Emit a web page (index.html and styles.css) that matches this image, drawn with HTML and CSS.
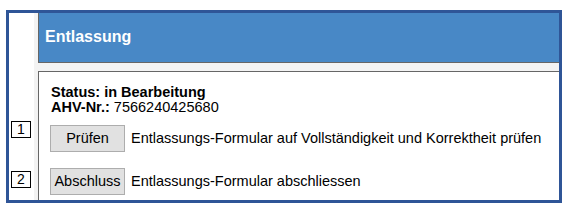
FILE: index.html
```html
<!DOCTYPE html>
<html lang="de">
<head>
<meta charset="utf-8">
<title>Entlassung</title>
<link rel="stylesheet" href="styles.css">
</head>
<body>
<div class="frame">
  <div class="rail"></div>
  <div class="panel">
    <div class="header">Entlassung</div>
    <div class="content">
      <div class="meta">
        <div class="meta-line"><b>Status: in Bearbeitung</b></div>
        <div class="meta-line"><b>AHV-Nr.:</b> 7566240425680</div>
      </div>
      <div class="row row-first">
        <button class="btn" type="button">Prüfen</button>
        <span class="desc">Entlassungs-Formular auf Vollständigkeit und Korrektheit prüfen</span>
      </div>
      <div class="row row-second">
        <button class="btn" type="button">Abschluss</button>
        <span class="desc">Entlassungs-Formular abschliessen</span>
      </div>
    </div>
  </div>
  <span class="marker marker-1">1</span>
  <span class="marker marker-2">2</span>
</div>
</body>
</html>
```

FILE: styles.css
```css
html, body {
  margin: 0;
  padding: 0;
  background: #ffffff;
}

body {
  font-family: "Liberation Sans", Arial, sans-serif;
  color: #000000;
  padding: 10px 0 0 6px;
  width: 570px;
  height: 211px;
  box-sizing: border-box;
  overflow: hidden;
}

.frame {
  position: relative;
  width: 550px;
  height: 187px;
  border: 3px solid #2f5597;
  display: grid;
  grid-template-columns: 25px 1fr;
  overflow: hidden;
  background: #ffffff;
}

.rail {
  background: #ffffff;
}

.panel {
  background: #f3f3f3;
  padding-left: 4px;
  display: flex;
  flex-direction: column;
  min-height: 0;
}

.header {
  height: 48px;
  flex: none;
  background: #4888c6;
  border-left: 1px solid #666666;
  border-bottom: 1px solid #666666;
  color: #ffffff;
  font-weight: bold;
  font-size: 16px;
  display: flex;
  align-items: center;
  padding-left: 6px;
  padding-bottom: 1px;
  box-sizing: content-box;
}

.content {
  margin-top: 8px;
  flex: 1;
  background: #ffffff;
  border-left: 1px solid #666666;
  border-top: 1px solid #666666;
  padding: 13px 0 0 12px;
  font-size: 14.5px;
}

.meta-line {
  line-height: 15px;
  white-space: nowrap;
}

.row {
  display: flex;
  align-items: center;
  margin-left: -1px;
}

.row-first {
  margin-top: 10px;
}

.row-second {
  margin-top: 16px;
}

.btn {
  width: 75px;
  height: 27px;
  padding: 0 0 2px 0;
  margin: 0;
  box-sizing: border-box;
  border: 1px solid #adadad;
  background: #e1e1e1;
  font-family: "Liberation Sans", Arial, sans-serif;
  font-size: 14.5px;
  color: #000000;
  border-radius: 0;
}

.desc {
  margin-left: 6px;
  white-space: nowrap;
  padding-bottom: 2px;
}

.marker {
  position: absolute;
  left: 2px;
  width: 20px;
  height: 17px;
  box-sizing: border-box;
  border: 1px solid #000000;
  background: #ffffff;
  font-size: 14px;
  line-height: 15px;
  text-align: center;
}

.marker-1 {
  top: 108px;
}

.marker-2 {
  top: 158px;
}
```
